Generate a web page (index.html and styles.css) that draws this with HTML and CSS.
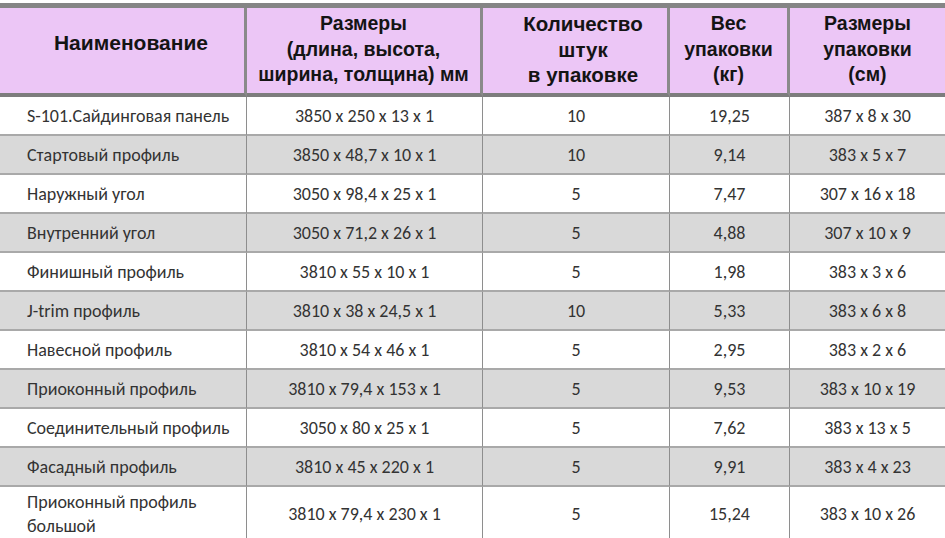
FILE: index.html
```html
<!DOCTYPE html>
<html lang="ru">
<head>
<meta charset="utf-8">
<title>Таблица профилей</title>
<link rel="stylesheet" href="styles.css">
</head>
<body>
<table class="spec">
  <colgroup>
    <col class="c1"><col class="c2"><col class="c3"><col class="c4"><col class="c5">
  </colgroup>
  <thead>
    <tr>
      <th class="name-h">Наименование</th>
      <th>Размеры<br>(длина, высота,<br>ширина, толщина) мм</th>
      <th class="qty-h">Количество<br>штук<br>в упаковке</th>
      <th>Вес<br>упаковки<br>(кг)</th>
      <th>Размеры<br>упаковки<br>(см)</th>
    </tr>
  </thead>
  <tbody>
    <tr><td class="name">S-101.Сайдинговая панель</td><td>3850 x 250 x 13 x 1</td><td>10</td><td>19,25</td><td>387 x 8 x 30</td></tr>
    <tr><td class="name">Стартовый профиль</td><td>3850 x 48,7 x 10 x 1</td><td>10</td><td>9,14</td><td>383 x 5 x 7</td></tr>
    <tr><td class="name">Наружный угол</td><td>3050 x 98,4 x 25 x 1</td><td>5</td><td>7,47</td><td>307 x 16 x 18</td></tr>
    <tr><td class="name">Внутренний угол</td><td>3050 x 71,2 x 26 x 1</td><td>5</td><td>4,88</td><td>307 x 10 x 9</td></tr>
    <tr><td class="name">Финишный профиль</td><td>3810 x 55 x 10 x 1</td><td>5</td><td>1,98</td><td>383 x 3 x 6</td></tr>
    <tr><td class="name">J-trim профиль</td><td>3810 x 38 x 24,5 x 1</td><td>10</td><td>5,33</td><td>383 x 6 x 8</td></tr>
    <tr><td class="name">Навесной профиль</td><td>3810 x 54 x 46 x 1</td><td>5</td><td>2,95</td><td>383 x 2 x 6</td></tr>
    <tr><td class="name">Приоконный профиль</td><td>3810 x 79,4 x 153 x 1</td><td>5</td><td>9,53</td><td>383 x 10 x 19</td></tr>
    <tr><td class="name">Соединительный профиль</td><td>3050 x 80 x 25 x 1</td><td>5</td><td>7,62</td><td>383 x 13 x 5</td></tr>
    <tr><td class="name">Фасадный профиль</td><td>3810 x 45 x 220 x 1</td><td>5</td><td>9,91</td><td>383 x 4 x 23</td></tr>
    <tr class="tall"><td class="name">Приоконный профиль<br>большой</td><td>3810 x 79,4 x 230 x 1</td><td>5</td><td>15,24</td><td>383 x 10 x 26</td></tr>
  </tbody>
</table>
</body>
</html>
```

FILE: styles.css
```css
html, body {
  margin: 0;
  padding: 0;
  background: #ffffff;
  overflow: hidden;
}

.spec {
  margin-top: 3px;
  width: 945px;
  table-layout: fixed;
  border-collapse: separate;
  border-spacing: 0;
  border-top: 5px solid #858585;
}

.c1 { width: 247px; }
.c2 { width: 236px; }
.c3 { width: 187px; }
.c4 { width: 120px; }
.c5 { width: 155px; }

.spec th {
  background: #ecc6f6;
  color: #141414;
  font-family: "Liberation Sans", Arial, sans-serif;
  font-weight: bold;
  font-size: 19.5px;
  line-height: 25.5px;
  height: 83px;
  padding: 0 0 2px 0;
  text-align: center;
  vertical-align: middle;
  border-bottom: 4px solid #7d7d7d;
  border-right: 3px solid #8a8a8a;
  box-sizing: content-box;
  white-space: nowrap;
}

.spec th:last-child { border-right: none; }

.spec th.name-h {
  font-size: 21px;
  padding-left: 18px;
  padding-bottom: 16px;
  height: 69px;
}

.spec th.qty-h {
  font-size: 20.5px;
  padding-left: 16px;
}

.spec td {
  font-family: Carlito, Calibri, "Open Sans", "Noto Sans", sans-serif;
  font-size: 18px;
  color: #333333;
  height: 37px;
  padding: 0 4px;
  text-align: center;
  vertical-align: middle;
  border-bottom: 2px solid #a9a9a9;
  border-right: 1px solid #8e8e8e;
  box-sizing: content-box;
  white-space: nowrap;
}

.spec td:last-child { border-right: none; }

.spec td.name {
  text-align: left;
  padding-left: 27px;
}

.spec tbody tr:nth-child(even) td { background: #d9d9d9; }

.spec tr.tall td {
  height: 54px;
  line-height: 24px;
  padding-top: 0;
}
```
